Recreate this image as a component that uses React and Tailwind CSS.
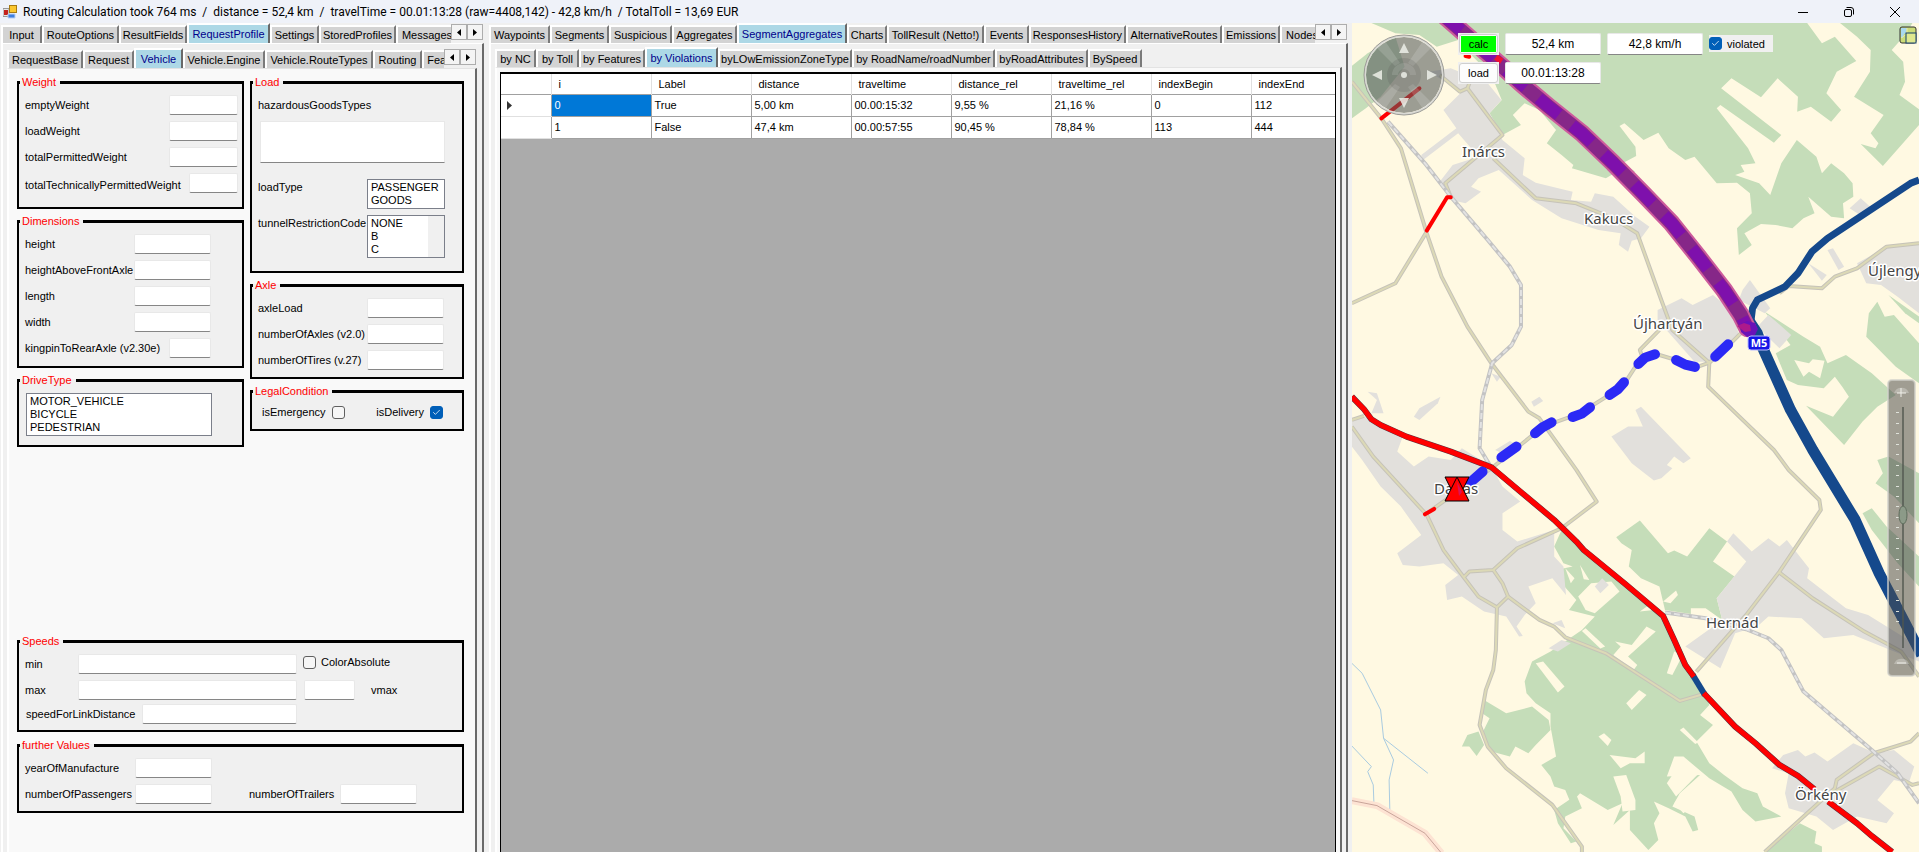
import React, { useState } from "react";
import clsx from "clsx";
import { Check } from "lucide-react";

// -------------------------------------------------------------------------
// Data
// -------------------------------------------------------------------------

const mainTabs = [
  { label: "Input", width: "w-[41px]" },
  { label: "RouteOptions", width: "w-[77px]" },
  { label: "ResultFields", width: "w-[68px]" },
  { label: "RequestProfile", width: "w-[83px]" },
  { label: "Settings", width: "w-[49px]" },
  { label: "StoredProfiles", width: "w-[77px]" },
  { label: "Messages", width: "w-[62px]" },
];

const profileTabs = [
  { label: "RequestBase", width: "w-[76px]" },
  { label: "Request", width: "w-[51px]" },
  { label: "Vehicle", width: "w-[49px]" },
  { label: "Vehicle.Engine", width: "w-[82px]" },
  { label: "Vehicle.RouteTypes", width: "w-[108px]" },
  { label: "Routing", width: "w-[49px]" },
  { label: "Features", width: "w-[54px]" },
];

const resultTabs = [
  { label: "Waypoints", width: "w-[61px]" },
  { label: "Segments", width: "w-[59px]" },
  { label: "Suspicious", width: "w-[63px]" },
  { label: "Aggregates", width: "w-[65px]" },
  { label: "SegmentAggregates", width: "w-[110px]" },
  { label: "Charts", width: "w-[40px]" },
  { label: "TollResult (Netto!)", width: "w-[97px]" },
  { label: "Events", width: "w-[45px]" },
  { label: "ResponsesHistory", width: "w-[97px]" },
  { label: "AlternativeRoutes", width: "w-[96px]" },
  { label: "Emissions", width: "w-[58px]" },
  { label: "Nodes", width: "w-[44px]" },
];

const aggregateTabs = [
  { label: "by NC", width: "w-[41px]" },
  { label: "by Toll", width: "w-[43px]" },
  { label: "by Features", width: "w-[66px]" },
  { label: "by Violations", width: "w-[73px]" },
  { label: "byLOwEmissionZoneType", width: "w-[134px]" },
  { label: "by RoadName/roadNumber", width: "w-[143px]" },
  { label: "byRoadAttributes", width: "w-[93px]" },
  { label: "BySpeed", width: "w-[54px]" },
];

const columns = ["i", "Label", "distance", "traveltime", "distance_rel", "traveltime_rel", "indexBegin", "indexEnd"];

const rows = [
  ["0", "True", "5,00 km", "00.00:15:32", "9,55 %", "21,16 %", "0", "112"],
  ["1", "False", "47,4 km", "00.00:57:55", "90,45 %", "78,84 %", "113", "444"],
];

// -------------------------------------------------------------------------
// Form controls
// -------------------------------------------------------------------------

function TabStrip({ tabs, initial, scroll }) {
  const [active, setActive] = useState(initial);

  return (
    <div className="flex h-5 items-end">
      <div role="tablist" className="flex min-w-0 flex-1 items-end overflow-hidden">
        {tabs.map((tab) => (
          <button
            key={tab.label}
            role="tab"
            aria-selected={active === tab.label}
            onClick={() => setActive(tab.label)}
            className={clsx(
              "shrink-0 whitespace-nowrap border-l-2 border-t-2 border-l-white border-t-white text-center",
              tab.width,
              active === tab.label
                ? "h-5 border-r-2 border-r-[#696969] bg-[#add8e6] text-[#00008b]"
                : "h-[18px] border-r-2 border-r-[#7a7a7a] bg-[#d3d3d3]"
            )}
          >
            {tab.label}
          </button>
        ))}
      </div>
      {scroll && (
        <div className="mr-px mt-px flex self-start">
          <button aria-label="Scroll left" className="grid h-4 w-4 place-items-center border border-[#adadad] bg-[#f4f4f4]">
            <svg width="4" height="7" viewBox="0 0 4 7"><path d="M4 0v7L0 3.5z" /></svg>
          </button>
          <button aria-label="Scroll right" className="grid h-4 w-4 place-items-center border border-[#adadad] bg-[#f4f4f4]">
            <svg width="4" height="7" viewBox="0 0 4 7"><path d="M0 0v7l4-3.5z" /></svg>
          </button>
        </div>
      )}
    </div>
  );
}

function Group({ title, className, children }) {
  return (
    <fieldset className={clsx("min-w-0 border-2 border-t-3 border-black bg-[#f0f0f0] px-1", className)}>
      <legend className="-ml-[3px] pl-0.5 pr-1 leading-3 text-[#ff0000]">{title}</legend>
      {children}
    </fieldset>
  );
}

function TextBox({ className, ...props }) {
  return (
    <input
      type="text"
      className={clsx("h-5 rounded-xs border border-[#e8e8e8] border-b-[#868686] bg-white px-1", className)}
      {...props}
    />
  );
}

function Field({ id, label, width, align = "items-center" }) {
  return (
    <div className={clsx("flex h-5 justify-between pl-0.5", align)}>
      <label htmlFor={id}>{label}</label>
      <TextBox id={id} className={width} />
    </div>
  );
}

function CheckBox({ id, checked }) {
  return (
    <span className="grid h-[13px] w-[13px] shrink-0 place-items-center">
      <input
        id={id}
        type="checkbox"
        defaultChecked={checked}
        className="peer col-start-1 row-start-1 h-[13px] w-[13px] appearance-none rounded-[3px] border border-[#5f5f5f] bg-[#f6f6f6] checked:border-[#005fb8] checked:bg-[#005fb8]"
      />
      <Check size={9} color="#fff" strokeWidth={2} className="pointer-events-none invisible col-start-1 row-start-1 peer-checked:visible" />
    </span>
  );
}

function ListBox({ id, label, options, className }) {
  return (
    <select
      id={id}
      aria-label={label}
      multiple
      size={options.length}
      className={clsx("appearance-none overflow-hidden border border-[#7b7f8a] bg-white py-px", className)}
    >
      {options.map((option) => (
        <option key={option} className="h-[13px] min-h-0 p-0 pl-[3px] leading-[13px]">{option}</option>
      ))}
    </select>
  );
}

// -------------------------------------------------------------------------
// Left side: request profile of the vehicle
// -------------------------------------------------------------------------

function VehicleForm() {
  return (
    <div className="min-h-0 flex-1 overflow-hidden border-r-2 border-t border-l-2 border-l-white border-r-[#696969] border-t-[#e3e3e3] bg-[#f9f9f9] pl-2 pr-[11px] pt-[7px]">
      <div className="flex gap-1.5">
        <div className="flex w-[227px] flex-col gap-1.5">
          <Group title="Weight" className="h-[133px]">
            <div className="flex flex-col gap-1.5 pt-[7px]">
              <Field id="emptyWeight" label="emptyWeight" width="w-[69px]" />
              <Field id="loadWeight" label="loadWeight" width="w-[69px]" />
              <Field id="totalPermittedWeight" label="totalPermittedWeight" width="w-[69px]" />
              <Field id="totalTechnically" label="totalTechnicallyPermittedWeight" width="w-[49px]" align="items-end" />
            </div>
          </Group>

          <Group title="Dimensions" className="h-[153px]">
            <div className="flex flex-col gap-1.5 pr-[27px] pt-[7px]">
              <Field id="height" label="height" width="w-[77px]" />
              <Field id="heightAboveFrontAxle" label="heightAboveFrontAxle" width="w-[77px]" />
              <Field id="length" label="length" width="w-[77px]" />
              <Field id="width" label="width" width="w-[77px]" />
              <Field id="kingpin" label="kingpinToRearAxle (v2.30e)" width="w-[42px]" />
            </div>
          </Group>

          <Group title="DriveType" className="h-[73px]">
            <ListBox label="DriveType" options={["MOTOR_VEHICLE", "BICYCLE", "PEDESTRIAN"]} className="ml-[3px] mt-[7px] block h-[43px] w-[186px]" />
          </Group>
        </div>

        <div className="flex w-[214px] flex-col gap-1.5">
          <Group title="Load" className="h-[197px]">
            <div className="flex flex-col pl-0.5 pr-[13px] pt-[9px]">
              <label htmlFor="hazardous" className="leading-4">hazardousGoodsTypes</label>
              <textarea id="hazardous" className="ml-0.5 mt-2 block h-[42px] resize-none border border-[#e8e8e8] border-b-[#868686] bg-white" />
              <div className="mt-4 flex justify-between">
                <label htmlFor="loadType" className="leading-4">loadType</label>
                <ListBox id="loadType" options={["PASSENGER", "GOODS"]} className="h-[30px] w-[78px]" />
              </div>
              <div className="mt-1.5 flex justify-between">
                <label htmlFor="tunnel" className="leading-4">tunnelRestrictionCode</label>
                <div className="relative flex">
                  <ListBox id="tunnel" options={["NONE", "B", "C"]} className="h-[43px] w-[78px]" />
                  <span className="absolute inset-y-px right-px w-4 bg-[#f0f0f0]" />
                </div>
              </div>
            </div>
          </Group>

          <Group title="Axle" className="h-[100px]">
            <div className="flex flex-col gap-1.5 pr-[14px] pt-[7px]">
              <Field id="axleLoad" label="axleLoad" width="w-[77px]" />
              <Field id="numberOfAxles" label="numberOfAxles (v2.0)" width="w-[77px]" />
              <Field id="numberOfTires" label="numberOfTires (v.27)" width="w-[77px]" />
            </div>
          </Group>

          <Group title="LegalCondition" className="h-[46px]">
            <div className="flex items-center justify-between pl-1.5 pr-[15px] pt-[7px]">
              <div className="flex items-center gap-1.5">
                <label htmlFor="isEmergency">isEmergency</label>
                <CheckBox id="isEmergency" />
              </div>
              <div className="flex items-center gap-1.5">
                <label htmlFor="isDelivery">isDelivery</label>
                <CheckBox id="isDelivery" checked />
              </div>
            </div>
          </Group>
        </div>
      </div>

      <div className="mt-[188px] flex flex-col gap-[7px]">
        <Group title="Speeds" className="h-[97px]">
          <div className="mt-[7px] flex h-5 items-center pl-0.5">
            <label htmlFor="min" className="w-[53px]">min</label>
            <TextBox id="min" className="w-[219px]" />
            <div className="ml-1.5 flex items-center gap-[5px] self-start">
              <CheckBox id="colorAbsolute" />
              <label htmlFor="colorAbsolute">ColorAbsolute</label>
            </div>
          </div>
          <div className="mt-1.5 flex h-5 items-center pl-0.5">
            <label htmlFor="max" className="w-[53px]">max</label>
            <TextBox id="max" className="w-[219px]" />
            <TextBox id="vmax" className="ml-[7px] w-[51px]" />
            <label htmlFor="vmax" className="ml-4">vmax</label>
          </div>
          <div className="mt-1 flex h-5 items-center pl-[3px]">
            <label htmlFor="speedForLink" className="w-[116px]">speedForLinkDistance</label>
            <TextBox id="speedForLink" className="w-[155px]" />
          </div>
        </Group>

        <Group title="further Values" className="h-[74px]">
          <div className="mt-[7px] flex h-5 items-center pl-0.5">
            <label htmlFor="year" className="w-[110px]">yearOfManufacture</label>
            <TextBox id="year" className="w-[77px]" />
          </div>
          <div className="mt-1.5 flex h-5 items-center pl-0.5">
            <label htmlFor="passengers" className="w-[110px]">numberOfPassengers</label>
            <TextBox id="passengers" className="w-[77px]" />
            <label htmlFor="trailers" className="ml-[37px] w-[91px]">numberOfTrailers</label>
            <TextBox id="trailers" className="w-[77px]" />
          </div>
        </Group>
      </div>
    </div>
  );
}

// -------------------------------------------------------------------------
// Middle: violations table
// -------------------------------------------------------------------------

function ViolationTable() {
  return (
    <div className="min-h-0 flex-1 overflow-hidden border border-b-0 border-t-2 border-black bg-[#ababab]">
      <table className="w-full table-fixed border-collapse bg-white text-left">
        <colgroup>
          <col className="w-[50px]" />
          {columns.map((column) => (
            <col key={column} className={column === "indexEnd" ? "w-auto" : "w-[100px]"} />
          ))}
        </colgroup>
        <thead>
          <tr className="h-5 border-b border-[#a0a0a0]">
            <th />
            {columns.map((column) => (
              <th key={column} className="border-l border-[#e0e0e0] p-0 pl-[7px] font-normal">{column}</th>
            ))}
          </tr>
        </thead>
        <tbody>
          {rows.map((row, y) => (
            <tr key={row[0]} className="h-[22px]">
              <td className="border-b border-[#e0e0e0] p-0 pl-1.5">
                {y === 0 && <svg width="5" height="9" viewBox="0 0 5 9"><path d="M0 0v9l5-4.500z" fill="#333" /></svg>}
              </td>
              {row.map((cell, x) => (
                <td
                  key={x}
                  className={clsx(
                    "border-b border-l border-[#a0a0a0] p-0 pl-[3px]",
                    x === 0 && y === 0 && "bg-[#0078d7] text-white"
                  )}
                >
                  {cell}
                </td>
              ))}
            </tr>
          ))}
        </tbody>
      </table>
    </div>
  );
}

// -------------------------------------------------------------------------
// Right side: map
// -------------------------------------------------------------------------

const forests = [
  "M85 69L150 100 215 105 262 140 320 120 360 170 410 225 438 300 405 340 440 405 490 375 468 345 500 310 540 330 585 390 560 430 600 465 632 495 628 505 720 535 750 515 800 515 765 490 802 468 800 440 757 378 770 370 822 420 862 398 890 445 935 480 960 470 1020 550 1075 548 1110 580 1115 640 1075 685 1080 765 1115 735 1095 700 1140 672 1180 675 1225 685 1255 655 1285 640 1268 590 1330 650 1365 655 1362 610 1390 590 1388 550 1365 520 1330 490 1305 520 1290 470 1237 420 1195 490 1165 585 1135 550 1070 525 1095 515 1085 495 1125 490 1105 445 1020 325 1030 315 1175 428 1195 405 1032 265 1060 235 1140 292 1185 235 1240 290 1238 335 1275 320 1330 365 1357 330 1317 280 1345 215 1398 183 1340 110 1305 130 1265 69Z",
  "M1354 69L1400 110 1437 150 1435 215 1392 290 1472 345 1437 400 1458 430 1450 445 1410 432 1470 498 1568 375V328L1515 285 1530 245 1525 185 1494 150 1534 100 1550 69Z",
  "M32 198L75 160 150 110 175 200 110 290 70 325 32 355Z",
  "M362 380L378 360 395 375 392 390 372 405Z",
  "M1150 935L1255 1010 1300 1040 1320 1090 1370 1065 1440 1120 1505 1185 1455 1220 1415 1265 1365 1335 1262 1217 1335 1250 1378 1190 1360 1160 1340 1130 1310 1165 1240 1155 1210 1140 1180 1060 1220 1035Z",
  "M1455 905L1475 950 1500 945 1568 1030V1150L1505 1100 1425 1010 1432 940Z",
  "M1485 885L1568 950V970L1530 940Z",
  "M1455 1380L1485 1370 1568 1420V1570L1500 1490 1450 1450 1470 1420Z",
  "M1415 1540L1440 1525 1480 1580 1568 1670V1760L1510 1690 1440 1590Z",
  "M748 1612L812 1562 888 1660 905 1652 940 1670 1000 1585 1048 1625 1010 1685 1068 1730 1020 1795 1035 1860 990 1825 950 1825 950 1842 880 1830 865 1760 815 1735 782 1700 790 1650 762 1630Z",
  "M600 1590L660 1650 760 1750 870 1845 905 1910 930 1960 955 2025 990 2080 1000 2115 975 2145 1010 2175 965 2225 1000 2290 1040 2325 1090 2365 1130 2380 1145 2420 1195 2450 1125 2465 1090 2430 1060 2375 1000 2335 930 2270 905 2270 885 2330 975 2325 920 2380 900 2420 960 2450 970 2490 955 2495 935 2450 890 2425 850 2405 865 2440 850 2470 862 2520 835 2550 785 2490 785 2430 740 2475 765 2410 725 2430 650 2380 625 2410 610 2370 580 2360 570 2330 545 2295 585 2270 570 2180 570 2140 530 2110 505 2080 500 2045 520 1985 570 1955 655 1890 690 1850 620 1830 640 1800 600 1750 585 1710 630 1700 605 1690 580 1640Z",
  "M390 2100L450 2140 520 2120 565 2160 570 2190 530 2235 510 2260 475 2240 460 2270 410 2255 385 2200 405 2155 385 2140Z",
  "M330 2240L345 2205 375 2195 390 2235 370 2268 350 2240Z",
  "M580 2430L640 2385 655 2425 610 2450 605 2485 640 2525 625 2530 590 2470Z",
  "M1150 2556L1245 2470 1290 2495 1285 2530 1305 2540V2556Z",
];

const clearings = [
  "M1230 1080L1270 1090 1280 1078 1312 1082 1300 1135 1270 1115 1255 1130Z",
  "M645 1790L680 1750 735 1745 757 1775 690 1840 665 1830Z",
  "M665 1885L718 1940 705 1946 655 1893Z",
  "M745 1925L790 1935 830 1880 855 1895 780 1970 805 1995 795 2010 740 1965 760 1940Z",
  "M885 2020L905 1955 928 1965 900 2025Z",
  "M775 2110L810 2070 830 2085 790 2130Z",
  "M700 2210L715 2200 735 2220 725 2238Z",
  "M730 2265L800 2275 825 2255 825 2290 785 2290 760 2305Z",
  "M740 2330L775 2325 800 2400 800 2430 765 2435 760 2390Z",
  "M875 1805L910 1772 915 1785 895 1810Z",
  "M530 1990L550 1985 608 2060 590 2078Z",
  "M885 2350L930 2275 972 2320 910 2390Z",
  "M905 2410L940 2365 970 2405 930 2440Z",
  "M985 2410L1030 2380 995 2420Z",
  "M930 2183L970 2228 962 2232 920 2190Z",
  "M812 1835L840 1812 870 1845 850 1830Z",
  "M610 1705L635 1735 625 1750Z",
  "M650 1695L675 1740 660 1738Z",
];

const towns = [
  "M240 215L300 205 400 250 437 300 405 340 440 420 500 475 495 525 530 548 630 575 625 600 680 605 690 580 740 590 800 650 838 680 815 715 790 722 780 755 755 735 760 700 700 690 600 655 520 600 430 510 375 535 355 560 382 575 340 610 300 600 270 545 305 495 375 470 320 400 225 480 220 465 315 385 280 330 330 275Z",
  "M860 930L925 895 955 915 1010 885 1065 935 1080 1005 1000 1085 960 1085 860 960Z",
  "M1090 870L1110 840 1165 925 1150 940 1080 900Z",
  "M1130 980L1160 945 1222 1005 1190 1045Z",
  "M735 1310L780 1280 820 1280 800 1230 815 1220 950 1375 930 1390 905 1370 885 1395 900 1405 870 1435 850 1442 790 1390Z",
  "M1400 790L1490 735H1568V940L1510 890 1465 855 1425 850Z",
  "M1320 750L1335 745 1365 800 1350 810Z",
  "M1268 790L1318 825 1305 842Z",
  "M1380 625L1410 595 1440 625 1415 650Z",
  "M32 1265L65 1250 170 1310 155 1355 200 1400 240 1370 300 1380 330 1345 410 1400 440 1460 488 1505 440 1540 440 1590 480 1625 580 1590 580 1670 605 1700 612 1785 575 1735 510 1760 530 1810 500 1845 478 1880 495 1908 485 1910 450 1850 390 1835 330 1790 290 1800 285 1755 320 1725 280 1690 215 1700 170 1695 155 1660 220 1605 165 1520 110 1460 60 1380 32 1340Z",
  "M75 1175L100 1180 118 1240 85 1240 100 1200Z",
  "M200 1250L215 1225 272 1190 265 1210 215 1260Z",
  "M518 1205L540 1190 550 1203 525 1220Z",
  "M420 1350L460 1323 490 1340 450 1365Z",
  "M410 1120L435 1130 425 1145Z",
  "M565 1945L600 1920 625 1930 590 1955Z",
  "M575 1870L600 1860 610 1885Z",
  "M690 1760L710 1735 728 1755 705 1780Z",
  "M1048 1625L1065 1600 1115 1655 1160 1615 1190 1640 1210 1620 1270 1705 1265 1735 1370 1825 1430 1845 1568 1940V1985L1390 1905 1310 1915 1250 1855 1160 1850 1130 1880 1070 1900 1030 2005 935 1940 1035 1860 1020 1795 1100 1685Z",
  "M1170 2305L1200 2265 1240 2250 1260 2270 1285 2258 1320 2285 1390 2230 1450 2260 1500 2250 1555 2300 1540 2350 1500 2340 1455 2400 1500 2440 1480 2470 1400 2450 1335 2490 1290 2450 1215 2425 1205 2380 1215 2320Z",
];

const roads = [
  "M32 245L115 360 165 445 235 700 275 830 345 980 410 1090 510 1235 540 1255 640 1410 695 1505 600 1585 480 1645 415 1710 350 1715 335 1732",
  "M235 695L150 850 32 910",
  "M270 225L325 275 345 265 440 405 285 550 300 590",
  "M345 265L368 200",
  "M415 475L530 595 640 610 740 655 805 700 870 900 900 990 1000 1088 997 1160 1175 1350 1215 1410 1298 1500 1302 1530 1190 1715 1100 1845 965 2015",
  "M865 990L812 1050 820 1075",
  "M1085 1000L1040 1050 1000 1088 970 1100 865 1065 840 1060 800 1100 765 1160 650 1240 550 1280 450 1370 410 1405 350 1450 235 1540",
  "M32 1280L90 1370 235 1545 280 1650 335 1732 375 1790 425 1822 422 1950 415 2010 395 2070 378 2175 400 2240 450 2305 575 2415 655 2540V2556",
  "M32 1260L65 1248",
  "M415 1710L440 1750 455 1790 425 1822",
  "M455 1790L540 1860 580 1880 610 1912 720 1960 920 2103 985 2082",
  "M1190 1718L1280 1795 1420 1895 1520 1955 1568 2030",
  "M1150 2556L1265 2440 1340 2365 1345 2340 1445 2260 1545 2225 1568 2200",
  "M1340 2375L1460 2300 1550 2355 1568 2350",
  "M1190 880L1215 858 1305 865 1340 830 1400 805 1480 740 1568 730",
];

const railways = [
  "M130 365L230 490 300 590 400 720 460 800 490 855 490 980 465 1035 412 1090 385 1200 378 1345 408 1400",
  "M880 1838L990 1855 1100 1888 1160 1915 1195 1950 1255 2075 1440 2250 1510 2320 1568 2410",
];

const streams = [
  "M32 1990L60 2020 110 2130 118 2215 145 2280 133 2340 135 2435",
  "M118 2215L238 2320",
  "M32 2238L85 2300 75 2315 90 2355 92 2415",
];

const trunkRoads = [
  "M32 1190L65 1228 85 1258 110 1275 180 1310 300 1355 410 1402 580 1560 640 1625 660 1650 770 1750 875 1848 905 1920 935 1995 958 2030",
  "M985 2080L1070 2180 1125 2230 1190 2295 1240 2328 1285 2368",
  "M1322 2405L1400 2470 1440 2508 1495 2556",
];

const blockedParts = ["M112 355L215 265", "M235 692L290 592 300 592", "M230 1543L255 1527", "M340 168L350 170"];

const motorwayRoute = "M285 50L440 200 495 255 565 320 655 400 740 490 820 580 898 670 970 770 1040 870 1085 945 1103 985";

const routeParts = [
  "M350 1450L386 1415",
  "M437 1372L478 1340",
  "M528 1300L548 1282 573 1267",
  "M630 1251L655 1241 677 1222",
  "M730 1185L752 1168 769 1147",
  "M808 1092L826 1073 853 1063",
  "M910 1080L935 1094 961 1101",
  "M1016 1070L1051 1033",
];

const places = [
  { name: "Inárcs", x: 110, y: 134 },
  { name: "Kakucs", x: 232, y: 201 },
  { name: "Újhartyán", x: 281, y: 306 },
  { name: "Újlengyel", x: 516, y: 253 },
  { name: "Dabas", x: 82, y: 471 },
  { name: "Hernád", x: 354, y: 605 },
  { name: "Örkény", x: 443, y: 777 },
];

const zoomTicks = [412, 423, 433, 444, 454, 465, 475, 486, 496, 506, 517, 527, 538, 548, 559, 569, 579, 590, 600, 611, 621].map((y) => y - 23);

function Lines({ paths, ...props }) {
  return (
    <g fill="none" strokeLinejoin="round" {...props}>
      {paths.map((d) => <path key={d} d={d} vectorEffect="non-scaling-stroke" />)}
    </g>
  );
}

function MapDrawing() {
  return (
    <svg width="567" height="829" viewBox="0 0 567 829" className="block max-w-none" fontFamily='"Noto Sans", sans-serif'>
      <g transform="matrix(.3693 0 0 .3333 -12 -23)">
        <g fill="#c5ddb9">{forests.map((d) => <path key={d} d={d} />)}</g>
        <g fill="#fff9e2">{clearings.map((d) => <path key={d} d={d} />)}</g>
        <g fill="#e2e0dc">{towns.map((d) => <path key={d} d={d} />)}</g>

        <Lines paths={streams} stroke="#a9cbe0" strokeWidth="1" />
        <Lines paths={["M32 2402L100 2417 230 2500 275 2560"]} stroke="#fde3d3" strokeWidth="7" />
        <Lines paths={["M32 2402L100 2417 230 2500 275 2560"]} stroke="#c9a59a" strokeWidth="1" />
        <Lines paths={roads} stroke="#c6c3b9" strokeWidth="4" />
        <Lines paths={roads} stroke="#dcd9b6" strokeWidth="2" />
        <Lines paths={railways} stroke="#c3c3c3" strokeWidth="4" />
        <Lines paths={railways} stroke="#e2e2e2" strokeWidth="2" strokeDasharray="6 3" />

        <Lines paths={["M1568 540L1545 550 1320 715 1278 755 1240 820 1205 860 1130 900 1117 925 1112 970"]} stroke="#15498c" strokeWidth="7" />
        <Lines paths={["M1100 950L1130 1000 1145 1045 1220 1230 1280 1350 1395 1560 1460 1720 1575 1965"]} stroke="#15498c" strokeWidth="11" />
        <Lines paths={["M955 2025L988 2085"]} stroke="#15498c" strokeWidth="6" />
        <Lines paths={trunkRoads} stroke="#5a3040" strokeWidth="6" />
        <Lines paths={trunkRoads} stroke="#ff0000" strokeWidth="5" />
        <Lines paths={blockedParts} stroke="#ff0000" strokeWidth="4" strokeLinecap="round" />

        <Lines paths={[motorwayRoute]} stroke="#cd5c9c" strokeWidth="18" strokeLinecap="round" />
        <Lines paths={[motorwayRoute]} stroke="#862788" strokeWidth="14" />
        <Lines paths={[motorwayRoute]} stroke="#7e10ac" strokeWidth="12" strokeDasharray="26 17" strokeDashoffset="5" />
        <Lines paths={["M422 172L438 184"]} stroke="#ee1133" strokeWidth="6" />
        <Lines paths={routeParts} stroke="#2b29f5" strokeWidth="10" strokeLinecap="round" />
      </g>
      <path d="M389 301l6-3 8 2 3 6-3 6-8 2-6-5z" fill="#6a12b8" />
      <path d="M385 303l7-3 6 2 1 6-6 1z" fill="#ad1a8c" />

      {/* Place names */}
      <g fontSize="15" fill="#444" stroke="#fff" strokeWidth="3" strokeLinejoin="round" paintOrder="stroke">
        {places.map((place) => <text key={place.name} x={place.x} y={place.y}>{place.name}</text>)}
      </g>
      <rect x="396" y="313" width="22" height="14" rx="3" fill="#1414e6" stroke="#b9b9ff" />
      <text x="407" y="324" fontSize="11" fontWeight="bold" fill="#fff" textAnchor="middle">M5</text>

      {/* Start and destination of the route */}
      <path d="M93 454h24l-12 24z" fill="#ff0000" stroke="#000" />
      <path d="M105 454l12 24H93z" fill="#ff0000" stroke="#000" />
      <path d="M105 459l5 10-3 4z" fill="#dd1155" />

      {/* Compass */}
      <circle cx="52" cy="52" r="38" fill="#55595a" fillOpacity=".58" />
      <circle cx="52" cy="52" r="39" fill="none" stroke="#d9d9d4" strokeWidth="2" />
      <circle cx="52" cy="52" r="40" fill="none" stroke="#9b9b96" strokeWidth="1" />
      <g fill="#fff" fillOpacity=".15">
        <path d="M43 43L25 25a38 38 0 0 1 8-7L48 40zM61 43l18-18a38 38 0 0 0-8-7L56 40zM43 61L25 79a38 38 0 0 0 8 7L48 64zM61 61l18 18a38 38 0 0 1-8 7L56 64z" />
        <path d="M40 52a12 12 0 0 1 24 0h-6a6 6 0 0 0-12 0z" />
      </g>
      <circle cx="52" cy="52" r="17" fill="#555" fillOpacity=".18" />
      <g fill="#eceee8" fillOpacity=".85">
        <path d="M52 20l5 10H47zM52 85l5-10H47zM20 52l10-5v10zM85 52l-10-5v10z" />
        <circle cx="52" cy="52" r="3" />
      </g>

      {/* Zoom slider */}
      <rect x="536" y="357" width="27" height="296" rx="4" fill="#4b4b4b" fillOpacity=".53" stroke="#d2d2cc" strokeOpacity=".7" strokeWidth="2" />
      <g fill="#d6d6d0" fillOpacity=".45">
        <path d="M542 370a8 8 0 0 1 15 0zM542 641a8 8 0 0 1 15 0z" />
      </g>
      <path d="M545 370h9M549 365v9M545 640h9" stroke="#f0f0ea" strokeWidth="1" />
      <path d="M551 384v241" stroke="#50564e" strokeOpacity=".7" strokeWidth="2" />
      {zoomTicks.map((y) => <rect key={y} x="544" y={y} width="3" height="1" fill="#dfe2da" />)}
      <ellipse cx="551" cy="492" rx="4" ry="9" fill="#8c9a88" stroke="#5e6c5c" />

      {/* Overview toggle */}
      <rect x="548" y="4" width="16" height="16" rx="2" fill="#cbdc78" stroke="#333" />
      <path d="M549 5h6l-1 5-2 1-1 4h-2z" fill="#a9d8ee" />
      <path d="M555 5v6M549 15l6-4h9" stroke="#e9e9a8" fill="none" />
      <rect x="554" y="10" width="10" height="10" fill="#dfe88f" stroke="#15406c" />
    </svg>
  );
}

function MapButton({ children, className }) {
  return (
    <div className="flex h-[22px] w-[41px] bg-[#f0f0f0] p-px">
      <button className="flex flex-1 rounded-[3px] border border-[#cfcfcf] bg-[#fdfdfd] p-px">
        <span className={clsx("flex-1 leading-4", className)}>{children}</span>
      </button>
    </div>
  );
}

function MapPanel() {
  return (
    <section className="relative w-[567px] shrink-0 overflow-hidden bg-[#fff9e2]">
      <MapDrawing />
      <div className="absolute left-[106px] top-2.5 flex flex-col gap-[7px]">
        <div className="flex items-start gap-1.5">
          <MapButton className="bg-[#00ff00]">calc</MapButton>
          <TextBox aria-label="Distance" defaultValue="52,4 km" className="h-[22px] w-24 text-center text-xs" />
          <TextBox aria-label="Average speed" defaultValue="42,8 km/h" className="h-[22px] w-24 text-center text-xs" />
          <div className="mt-0.5 flex h-[17px] w-16 items-center gap-[5px] bg-[#f0f0f0]">
            <CheckBox id="violated" checked />
            <label htmlFor="violated">violated</label>
          </div>
        </div>
        <div className="flex gap-1.5">
          <MapButton>load</MapButton>
          <TextBox aria-label="Travel time" defaultValue="00.01:13:28" className="h-[22px] w-24 text-center text-xs" />
        </div>
      </div>
    </section>
  );
}

// -------------------------------------------------------------------------
// Window
// -------------------------------------------------------------------------

function TitleBar() {
  return (
    <header className="flex h-[23px] shrink-0 items-center bg-[#eff2f9] pl-[3px] font-['Roboto',sans-serif] text-xs">
      <svg width="14" height="14" viewBox="0 0 14 14">
        <path d="M0 3.500h6v8H0z" fill="#e8e8e8" stroke="#999" />
        <rect x="1" y="5" width="4" height="5" fill="#c4211c" />
        <rect x="6.500" y=".5" width="7" height="7" fill="#fbc72f" stroke="#a77b13" />
        <path d="M5 9h7v4H5z" fill="#3f7fe0" stroke="#bcd0f0" />
      </svg>
      <h1 className="ml-1.5 flex-1 whitespace-pre">
        {"Routing Calculation took 764 ms  /  distance = 52,4 km  /  travelTime = 00.01:13:28 (raw=4408,142) - 42,8 km/h  / TotalToll = 13,69 EUR"}
      </h1>
      <div className="flex">
        <button aria-label="Minimize" className="grid h-[22px] w-[46px] place-items-center">
          <svg width="10" height="10" viewBox="0 0 10 10"><path d="M0 5.500h10" stroke="#000" /></svg>
        </button>
        <button aria-label="Restore" className="grid h-[22px] w-[46px] place-items-center">
          <svg width="10" height="10" viewBox="0 0 10 10" fill="none" stroke="#000">
            <rect x=".5" y="2.500" width="7" height="7" rx="1.500" />
            <path d="M2.500.5H7A2.500 2.500 0 0 1 9.500 3v4.500" />
          </svg>
        </button>
        <button aria-label="Close" className="mr-px grid h-[22px] w-[46px] place-items-center">
          <svg width="10" height="10" viewBox="0 0 10 10"><path d="M0 0l10 10M10 0L0 10" stroke="#000" /></svg>
        </button>
      </div>
    </header>
  );
}

function App() {
  return (
    <div className="flex h-screen flex-col overflow-hidden bg-[#f0f0f0] font-['Liberation_Sans',sans-serif] text-[11px] leading-4 text-black">
      <TitleBar />
      <main className="flex min-h-0 flex-1">
        {/* Request */}
        <section className="flex w-[484px] shrink-0 flex-col pl-px">
          <TabStrip tabs={mainTabs} initial="RequestProfile" scroll />
          <div className="flex min-h-0 flex-1 flex-col border-l-2 border-r-2 border-t border-l-white border-r-[#696969] border-t-white pl-1 pr-[5px] pt-1">
            <TabStrip tabs={profileTabs} initial="Vehicle" scroll />
            <VehicleForm />
          </div>
        </section>

        {/* Response */}
        <section className="ml-[5px] mr-1 flex min-w-0 flex-1 flex-col">
          <TabStrip tabs={resultTabs} initial="SegmentAggregates" scroll />
          <div className="flex min-h-0 flex-1 flex-col border-l-2 border-r-2 border-t border-l-white border-r-[#696969] border-t-white pl-1 pr-1 pt-[3px]">
            <TabStrip tabs={aggregateTabs} initial="by Violations" />
            <div className="flex min-h-0 flex-1 flex-col border-l-2 border-r-2 border-t border-l-white border-r-[#696969] border-t-[#e3e3e3] bg-[#f9f9f9] pl-[3px] pr-1 pt-1">
              <ViolationTable />
            </div>
          </div>
        </section>

        <MapPanel />
      </main>
    </div>
  );
}

export default App;
